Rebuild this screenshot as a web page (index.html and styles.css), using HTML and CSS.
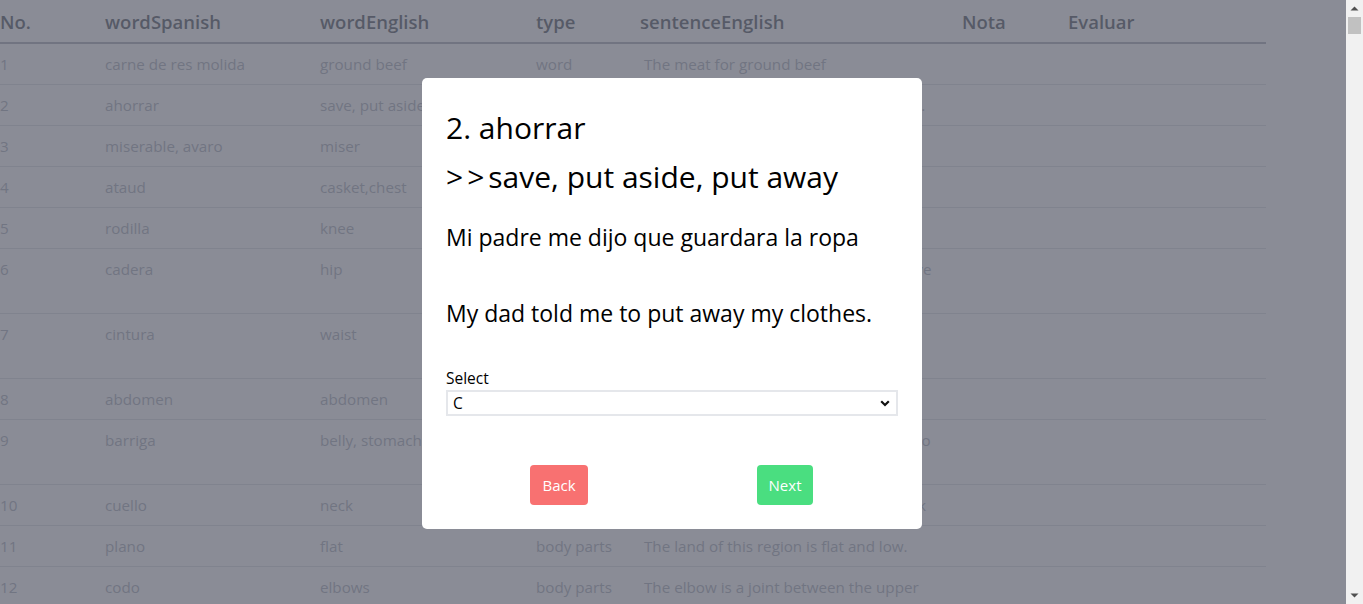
FILE: index.html
```html
<!DOCTYPE html>
<html lang="es">
<head>
<meta charset="utf-8">
<title>Vocabulario</title>
<link rel="stylesheet" href="styles.css">
</head>
<body>
<main class="page">
  <table class="words">
    <colgroup>
      <col class="c-no"><col class="c-es"><col class="c-en"><col class="c-type"><col class="c-sent"><col class="c-nota"><col class="c-eval">
    </colgroup>
    <thead>
      <tr><th>No.</th><th>wordSpanish</th><th>wordEnglish</th><th>type</th><th>sentenceEnglish</th><th>Nota</th><th>Evaluar</th></tr>
    </thead>
    <tbody>
      <tr><td>1</td><td>carne de res molida</td><td>ground beef</td><td>word</td><td class="sent">The meat for ground beef</td><td></td><td></td></tr>
      <tr><td>2</td><td>ahorrar</td><td>save, put aside, put away</td><td>word</td><td class="sent">My dad told me to put away my clothes.</td><td></td><td></td></tr>
      <tr><td>3</td><td>miserable, avaro</td><td>miser</td><td>word</td><td class="sent">He is a miser who never spends.</td><td></td><td></td></tr>
      <tr><td>4</td><td>ataud</td><td>casket,chest</td><td>word</td><td class="sent">The casket was made of wood.</td><td></td><td></td></tr>
      <tr><td>5</td><td>rodilla</td><td>knee</td><td>body parts</td><td class="sent">I hurt my knee playing.</td><td></td><td></td></tr>
      <tr><td>6</td><td>cadera</td><td>hip</td><td>body parts</td><td class="sent">Place your hands on your hips and move side to side.</td><td></td><td></td></tr>
      <tr><td>7</td><td>cintura</td><td>waist</td><td>body parts</td><td class="sent">She tied a belt around her waist to hold up her pants.</td><td></td><td></td></tr>
      <tr><td>8</td><td>abdomen</td><td>abdomen</td><td>body parts</td><td class="sent">The abdomen holds the stomach.</td><td></td><td></td></tr>
      <tr><td>9</td><td>barriga</td><td>belly, stomach</td><td>body parts</td><td class="sent">My belly hurts and so I am going to go to a doctor.</td><td></td><td></td></tr>
      <tr><td>10</td><td>cuello</td><td>neck</td><td>body parts</td><td class="sent">She wears a gold chain around her neck</td><td></td><td></td></tr>
      <tr><td>11</td><td>plano</td><td>flat</td><td>body parts</td><td class="sent">The land of this region is flat and low.</td><td></td><td></td></tr>
      <tr><td>12</td><td>codo</td><td>elbows</td><td>body parts</td><td class="sent">The elbow is a joint between the upper arm and the forearm.</td><td></td><td></td></tr>
      <tr><td>13</td><td>hombro</td><td>shoulder</td><td>body parts</td><td class="sent">He carried the bag on his shoulder.</td><td></td><td></td></tr>
      <tr><td>14</td><td>muñeca</td><td>wrist</td><td>body parts</td><td class="sent">She wears a watch on her wrist.</td><td></td><td></td></tr>
    </tbody>
  </table>
</main>

<div class="overlay">
  <section class="modal">
    <h2 class="title">2. ahorrar</h2>
    <h2 class="meaning"><span class="arrows">&gt;&gt;</span>save, put aside, put away</h2>
    <p class="sentence first">Mi padre me dijo que guardara la ropa</p>
    <p class="sentence second">My dad told me to put away my clothes.</p>
    <label class="label" for="answer">Select</label>
    <div class="select-wrap">
      <select id="answer" class="select">
        <option>A</option>
        <option>B</option>
        <option selected>C</option>
      </select>
      <svg class="chevron" width="10" height="7" viewBox="0 0 10 7" aria-hidden="true"><path d="M1.2 1.2 L5 5 L8.8 1.2" fill="none" stroke="#111" stroke-width="2.2"/></svg>
    </div>
    <div class="actions">
      <button class="btn back">Back</button>
      <button class="btn next">Next</button>
    </div>
  </section>
</div>

<div class="scrollbar" aria-hidden="true">
  <svg class="sb-arrow" width="17" height="17" viewBox="0 0 17 17"><path d="M4.5 10.5 L8.5 6.5 L12.5 10.5 Z" fill="#505050"/></svg>
  <div class="sb-track"><div class="sb-thumb"></div></div>
  <svg class="sb-arrow" width="17" height="17" viewBox="0 0 17 17"><path d="M4.5 6.5 L8.5 10.5 L12.5 6.5 Z" fill="#505050"/></svg>
</div>
</body>
</html>
```
FILE: styles.css
```css
html, body {
  margin: 0;
  padding: 0;
}
body {
  background: #ffffff;
  font-family: "Open Sans", "Noto Sans", sans-serif;
  color: #374151;
}
.page {
  width: 1266px;
}
.words {
  width: 1266px;
  border-collapse: collapse;
  table-layout: fixed;
}
.c-no { width: 105px; }
.c-es { width: 215px; }
.c-en { width: 216px; }
.c-type { width: 104px; }
.c-sent { width: 322px; }
.c-nota { width: 106px; }
.c-eval { width: 198px; }

.words th {
  text-align: left;
  font-size: 18.5px;
  font-weight: 600;
  line-height: 28px;
  padding: 8px 0 6px 0;
  color: #333a44;
  border-bottom: 2px solid #9aa0aa;
}
.words td {
  font-size: 15.2px;
  line-height: 24px;
  padding: 8px 0;
  color: #9ca3af;
  border-bottom: 1px solid #d6d9de;
  vertical-align: top;
}
.words td.sent {
  padding-left: 4px;
  padding-right: 20px;
}

.overlay {
  position: fixed;
  top: 0;
  left: 0;
  bottom: 0;
  right: 17px;
  background: rgba(99, 102, 115, 0.75);
  display: flex;
  align-items: flex-start;
  justify-content: center;
  padding-top: 78px;
  padding-right: 2px;
}
.modal {
  width: 500px;
  box-sizing: border-box;
  background: #ffffff;
  border-radius: 5px;
  padding: 24px;
  color: #000000;
  display: flex;
  flex-direction: column;
}
.title, .meaning {
  margin: 0;
  font-size: 30px;
  line-height: 40px;
  font-weight: 400;
}
.title { margin-top: 6px; }
.meaning { margin-top: 9px; }
.arrows { letter-spacing: 4px; }
.sentence {
  margin: 0;
  font-size: 23px;
  line-height: 32px;
}
.sentence.first { margin-top: 24px; }
.sentence.second { margin-top: 44px; }
.label {
  margin-top: 37px;
  font-size: 15.5px;
  line-height: 24px;
}
.select-wrap {
  position: relative;
  height: 26px;
}
.select {
  appearance: none;
  -webkit-appearance: none;
  width: 100%;
  height: 26px;
  box-sizing: border-box;
  border: 2px solid #e5e7eb;
  border-radius: 0;
  background: #ffffff;
  padding: 0 5px;
  font-family: inherit;
  font-size: 15.5px;
  color: #000;
  outline: none;
}
.chevron {
  position: absolute;
  right: 8px;
  top: 10px;
}
.actions {
  margin-top: 49px;
  display: flex;
  justify-content: space-around;
}
.btn {
  height: 40px;
  padding: 0 12px;
  border: none;
  border-radius: 4px;
  font-family: inherit;
  font-size: 15px;
  color: #ffffff;
}
.back { background: #f87171; }
.next { background: #4ade80; }

.scrollbar {
  position: fixed;
  top: 0;
  right: 0;
  bottom: 0;
  width: 17px;
  background: #f1f1f1;
  display: flex;
  flex-direction: column;
}
.sb-arrow { flex: none; }
.sb-track {
  flex: 1;
  padding: 0 2px;
}
.sb-thumb {
  height: 17px;
  background: #c1c1c1;
}
```
